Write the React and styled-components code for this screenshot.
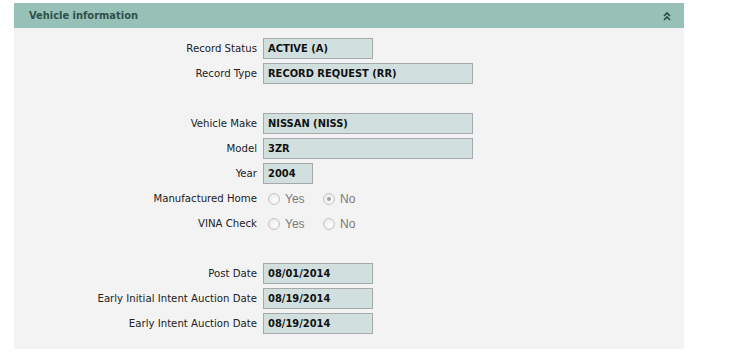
import React from "react";
import styled, { createGlobalStyle } from "styled-components";

const GlobalStyle = createGlobalStyle`
    body {
        margin: 0;
        background: #ffffff;
        font-family: "DejaVu Sans Condensed", "DejaVu Sans", sans-serif;
    }
`;

const Panel = styled.section`
    width: 670px;
    margin: 3px 0 0 14px;
    background: #f3f3f3;
    padding-bottom: 13px;
`;

const Header = styled.div`
    height: 25px;
    background: #97c1b6;
    display: flex;
    align-items: center;
    justify-content: space-between;
    padding: 0 13px 0 15px;
    color: #2f4f4a;
    font-size: 11px;
    font-weight: bold;
`;

const Body = styled.div`
    display: flex;
    flex-direction: column;
    padding-top: 8px;
`;

const Row = styled.div`
    display: grid;
    grid-template-columns: 243px auto;
    column-gap: 6px;
    align-items: center;
    height: 25px;
`;

const Spacer = styled.div`
    height: 25px;
`;

const Label = styled.span`
    text-align: right;
    font-size: 11.3px;
    color: #222;
`;

const Field = styled.div`
    box-sizing: border-box;
    width: ${(p) => p.$w}px;
    height: 21px;
    background: #d1e0df;
    border: 1px solid #a5a9a9;
    display: flex;
    align-items: center;
    padding-left: 4px;
    font-size: 11px;
    font-weight: bold;
    color: #111;
`;

const Radios = styled.div`
    display: flex;
    align-items: center;
    gap: 18px;
    padding-left: 5px;
`;

const Option = styled.label`
    display: flex;
    align-items: center;
    gap: 5px;
    font-family: "Liberation Sans", Arial, sans-serif;
    font-size: 12px;
    color: #7a7a7a;
    width: 37px;
`;

const Dot = styled.span`
    box-sizing: border-box;
    width: 12px;
    height: 12px;
    border-radius: 50%;
    border: 1px solid #c4c4c4;
    background: radial-gradient(circle at 60% 60%, #fdfdfd, #e4e4e4);
    display: flex;
    align-items: center;
    justify-content: center;

    &::after {
        content: "";
        width: 4px;
        height: 4px;
        border-radius: 50%;
        background: ${(p) => (p.$on ? "#a0a0a0" : "transparent")};
    }
`;

const Chevrons = () => (
    <svg width="8" height="10" viewBox="0 0 8 10">
        <path d="M1 5 L4 2 L7 5 M1 9 L4 6 L7 9" fill="none" stroke="#2a4a45" strokeWidth="1.6" />
    </svg>
);

const TextRow = ({ label, value, w }) => (
    <Row>
        <Label>{label}</Label>
        <Field $w={w}>{value}</Field>
    </Row>
);

const RadioRow = ({ label, value }) => (
    <Row>
        <Label>{label}</Label>
        <Radios>
            <Option><Dot $on={value === "Yes"} />Yes</Option>
            <Option><Dot $on={value === "No"} />No</Option>
        </Radios>
    </Row>
);

const App = () => (
    <>
        <GlobalStyle />
        <Panel>
            <Header>
                <span>Vehicle information</span>
                <Chevrons />
            </Header>
            <Body>
                <TextRow label="Record Status" value="ACTIVE (A)" w={110} />
                <TextRow label="Record Type" value="RECORD REQUEST (RR)" w={210} />
                <Spacer />
                <TextRow label="Vehicle Make" value="NISSAN (NISS)" w={210} />
                <TextRow label="Model" value="3ZR" w={210} />
                <TextRow label="Year" value="2004" w={50} />
                <RadioRow label="Manufactured Home" value="No" />
                <RadioRow label="VINA Check" value="" />
                <Spacer />
                <TextRow label="Post Date" value="08/01/2014" w={110} />
                <TextRow label="Early Initial Intent Auction Date" value="08/19/2014" w={110} />
                <TextRow label="Early Intent Auction Date" value="08/19/2014" w={110} />
            </Body>
        </Panel>
    </>
);

export default App;
